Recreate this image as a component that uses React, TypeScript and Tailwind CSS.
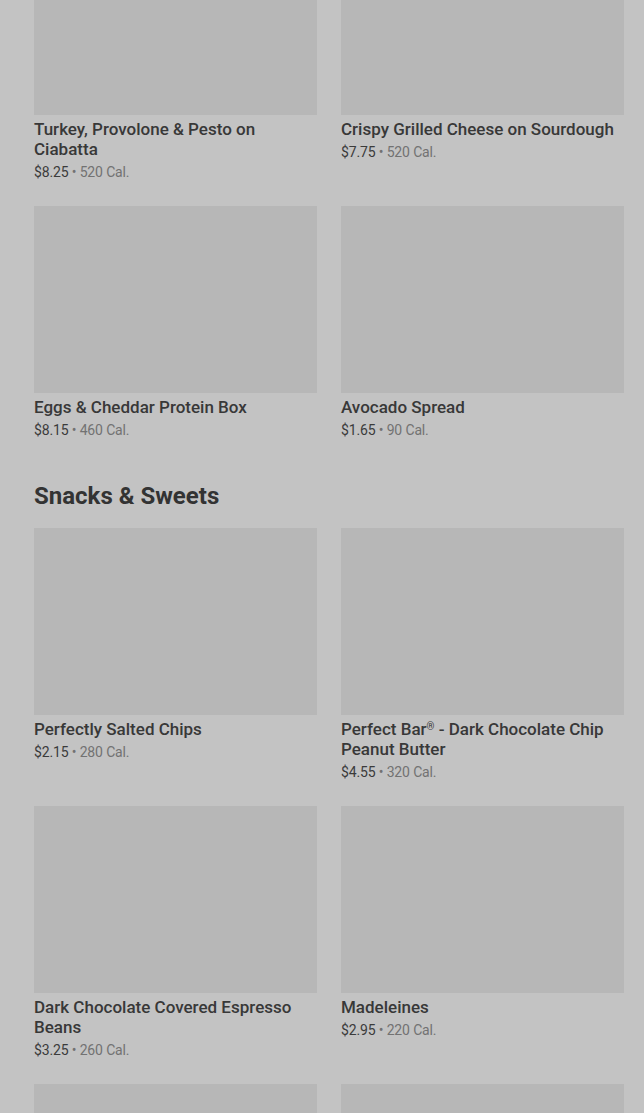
type Item = { name: string; reg?: string; rest?: string; price: string; cal: string };

const mains: Item[] = [
  { name: "Turkey, Provolone & Pesto on Ciabatta", price: "$8.25", cal: "520 Cal." },
  { name: "Crispy Grilled Cheese on Sourdough", price: "$7.75", cal: "520 Cal." },
  { name: "Eggs & Cheddar Protein Box", price: "$8.15", cal: "460 Cal." },
  { name: "Avocado Spread", price: "$1.65", cal: "90 Cal." },
];

const snacks: Item[] = [
  { name: "Perfectly Salted Chips", price: "$2.15", cal: "280 Cal." },
  {
    name: "Perfect Bar",
    reg: "®",
    rest: " - Dark Chocolate Chip Peanut Butter",
    price: "$4.55",
    cal: "320 Cal.",
  },
  { name: "Dark Chocolate Covered Espresso Beans", price: "$3.25", cal: "260 Cal." },
  { name: "Madeleines", price: "$2.95", cal: "220 Cal." },
  { name: "", price: "", cal: "" },
  { name: "", price: "", cal: "" },
];

function Card({ item }: { item: Item }) {
  return (
    <div className="flex flex-col">
      <div className="h-[187px] w-full bg-[#b7b7b7]" />
      {item.name && (
        <>
          <p className="mt-[4px] text-[17px] leading-[20px] font-medium text-[#383838]">
            {item.name}
            {item.reg && <sup className="text-[10px] leading-none">{item.reg}</sup>}
            {item.rest}
          </p>
          <p className="mt-[3px] text-[14px] leading-[20px] tracking-[-0.15px] text-[#3b3b3b]">
            {item.price}
            <span className="text-[#727272]"> • {item.cal}</span>
          </p>
        </>
      )}
    </div>
  );
}

export default function App() {
  return (
    <div
      className="h-[1113px] overflow-hidden bg-[#c3c3c3]"
      style={{ fontFamily: "Roboto, 'Liberation Sans', sans-serif" }}
    >
      <div className="-mt-[72px] pl-[34px] pr-[20px]">
        <div className="grid grid-cols-2 gap-x-[24px] gap-y-[24px]">
          {mains.map((item, i) => (
            <Card key={i} item={item} />
          ))}
        </div>
        <h2 className="mt-[40px] mb-[16px] text-[24px] leading-[32px] font-bold text-[#333333]">
          Snacks &amp; Sweets
        </h2>
        <div className="grid grid-cols-2 gap-x-[24px] gap-y-[24px]">
          {snacks.map((item, i) => (
            <Card key={i} item={item} />
          ))}
        </div>
      </div>
    </div>
  );
}
